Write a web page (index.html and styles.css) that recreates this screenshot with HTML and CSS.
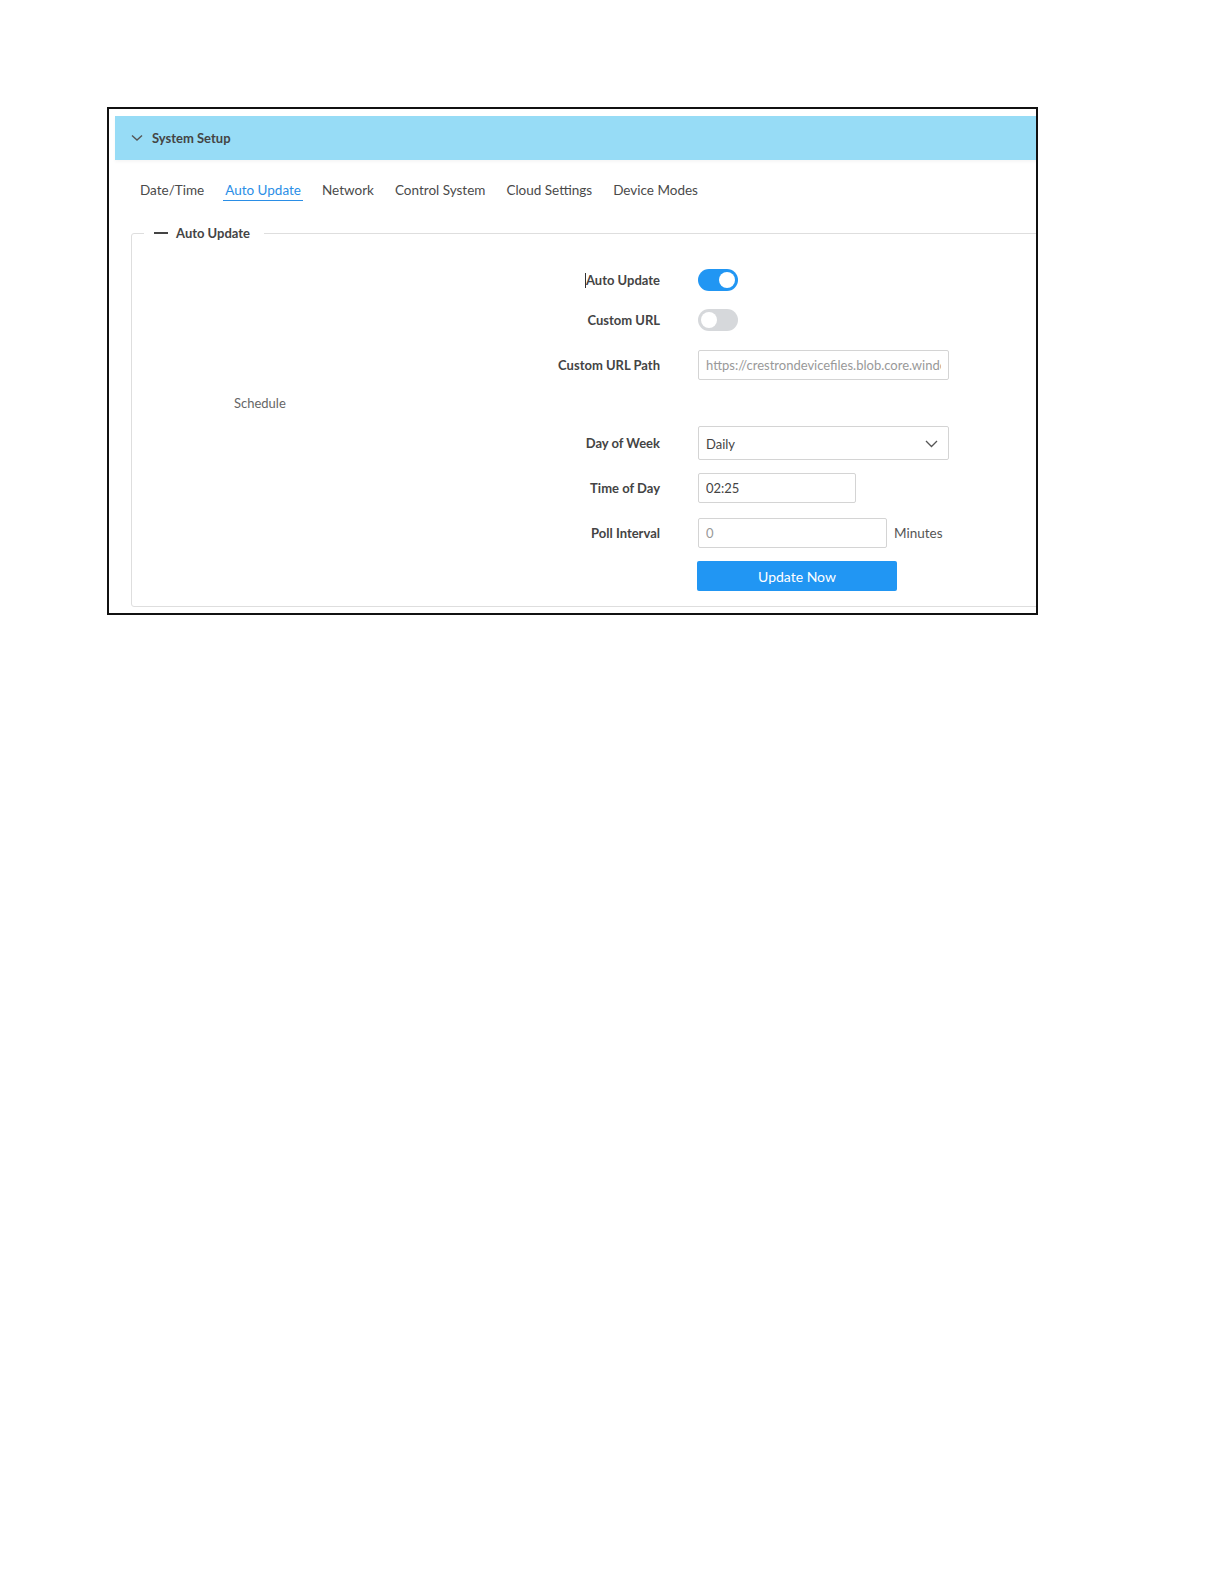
FILE: index.html
```html
<!DOCTYPE html>
<html lang="en">
<head>
  <meta charset="UTF-8" />
  <title>System Setup - Auto Update</title>
  <link rel="stylesheet" href="styles.css">
</head>
<body>
  <div class="page">
    <div class="frame">
      <div class="panel">
        <div class="panel-header">
          <svg class="chevron" width="12" height="8" viewBox="0 0 12 8">
            <path d="M1 1.5 L6 6 L11 1.5" fill="none" stroke="#555" stroke-width="1.4"/>
          </svg>
          <span>System Setup</span>
        </div>

        <div class="tabs">
          <span class="tab">Date/Time</span>
          <span class="tab active">Auto Update</span>
          <span class="tab">Network</span>
          <span class="tab">Control System</span>
          <span class="tab">Cloud Settings</span>
          <span class="tab">Device Modes</span>
        </div>

        <fieldset class="group">
          <legend><span class="dash"></span>Auto Update</legend>

          <div class="form">
            <div class="row row-toggle">
              <label class="caret">Auto Update</label>
              <span class="switch on"><span class="knob"></span></span>
            </div>
            <div class="row row-toggle2">
              <label>Custom URL</label>
              <span class="switch"><span class="knob"></span></span>
            </div>
            <div class="row row-input">
              <label>Custom URL Path</label>
              <input class="field wide" type="text" placeholder="https://crestrondevicefiles.blob.core.windows.net/firmware">
            </div>

            <div class="section-title">Schedule</div>

            <div class="row row-select">
              <label>Day of Week</label>
              <div class="select">
                <span>Daily</span>
                <svg width="13" height="8" viewBox="0 0 13 8">
                  <path d="M1 1 L6.5 6.5 L12 1" fill="none" stroke="#555" stroke-width="1.3"/>
                </svg>
              </div>
            </div>
            <div class="row row-time">
              <label>Time of Day</label>
              <input class="field time" type="text" value="02:25">
            </div>
            <div class="row row-poll">
              <label>Poll Interval</label>
              <input class="field poll" type="text" placeholder="0">
              <span class="unit">Minutes</span>
            </div>
            <div class="row">
              <label></label>
              <button class="btn-primary">Update Now</button>
            </div>
          </div>
        </fieldset>
      </div>
    </div>
  </div>
</body>
</html>
```

FILE: styles.css
```css
body {
  margin: 0;
  font-family: Lato, "Open Sans", sans-serif;
  color: #444;
  background: #fff;
}

.page {
  padding: 107px 0 0 107px;
}

.frame {
  box-sizing: border-box;
  width: 931px;
  height: 508px;
  border: 2px solid #111;
  padding: 7px 0 0 6px;
  overflow: hidden;
}

.panel {
  width: 960px;
}

.panel-header {
  height: 44px;
  background-color: #97dcf6;
  display: flex;
  align-items: center;
  padding-left: 16px;
  font-size: 13px;
  font-weight: 700;
  color: #444;
  box-shadow: 0 2px 3px rgba(0, 0, 0, 0.04);
}

.chevron {
  margin-right: 9px;
}

.tabs {
  display: flex;
  padding: 20px 0 0 23px;
  font-size: 13.5px;
  line-height: 20px;
}

.tab {
  padding: 0 2px;
  margin-right: 17px;
  color: #4a4a4a;
  border-bottom: 1px solid transparent;
}

.tab.active {
  color: #2a8ee6;
  border-bottom-color: #2a8ee6;
}

.group {
  margin: 24px 0 0 16px;
  padding: 0 0 15px 0;
  border: 1px solid #dedede;
  border-radius: 3px;
  min-width: 0;
}

.group legend {
  margin-left: 12px;
  padding: 0 14px 0 10px;
  font-size: 13px;
  font-weight: 700;
  line-height: 16px;
  color: #444;
  display: flex;
  align-items: center;
}

.dash {
  display: inline-block;
  width: 14px;
  height: 2px;
  background: #444;
  margin-right: 8px;
}

.form {
  padding-top: 28px;
}

.row {
  display: flex;
  align-items: center;
}

.row label {
  width: 528px;
  margin-right: 38px;
  text-align: right;
  font-size: 13px;
  font-weight: 700;
  color: #444;
}

.row label.caret::before {
  content: "";
  display: inline-block;
  width: 1px;
  height: 15px;
  background: #333;
  vertical-align: -3px;
}

.row-toggle {
  height: 22px;
  margin-bottom: 18px;
}

.row-toggle2 {
  height: 22px;
  margin-bottom: 19px;
}

.row-input {
  height: 30px;
}

.row-select {
  height: 34px;
  margin-bottom: 13px;
}

.row-time {
  height: 30px;
  margin-bottom: 15px;
}

.row-poll {
  height: 30px;
  margin-bottom: 13px;
}

.section-title {
  height: 46px;
  line-height: 46px;
  padding-left: 102px;
  font-size: 13px;
  color: #666;
}

.switch {
  position: relative;
  width: 40px;
  height: 22px;
  border-radius: 11px;
  background: #d6d8db;
}

.switch.on {
  background: #2196f3;
}

.knob {
  position: absolute;
  top: 3px;
  left: 3px;
  width: 16px;
  height: 16px;
  border-radius: 50%;
  background: #fff;
}

.switch.on .knob {
  left: 21px;
}

.field {
  box-sizing: border-box;
  height: 30px;
  border: 1px solid #d4d4d4;
  border-radius: 2px;
  padding: 0 7px;
  font-family: Lato, "Open Sans", sans-serif;
  font-size: 13px;
  color: #444;
  outline: none;
}

.field::placeholder {
  color: #999;
}

.field.wide {
  width: 251px;
}

.field.time {
  width: 158px;
}

.field.poll {
  width: 189px;
}

.unit {
  margin-left: 7px;
  font-size: 13.5px;
  color: #555;
}

.select {
  box-sizing: border-box;
  width: 251px;
  height: 34px;
  border: 1px solid #d4d4d4;
  border-radius: 2px;
  display: flex;
  align-items: center;
  justify-content: space-between;
  padding: 2px 10px 0 7px;
  font-size: 13px;
  color: #444;
}

.btn-primary {
  width: 200px;
  height: 30px;
  margin-left: -1px;
  border: none;
  border-radius: 2px;
  background-color: #2196f3;
  color: #fff;
  font-family: Lato, "Open Sans", sans-serif;
  font-size: 14px;
}
```
